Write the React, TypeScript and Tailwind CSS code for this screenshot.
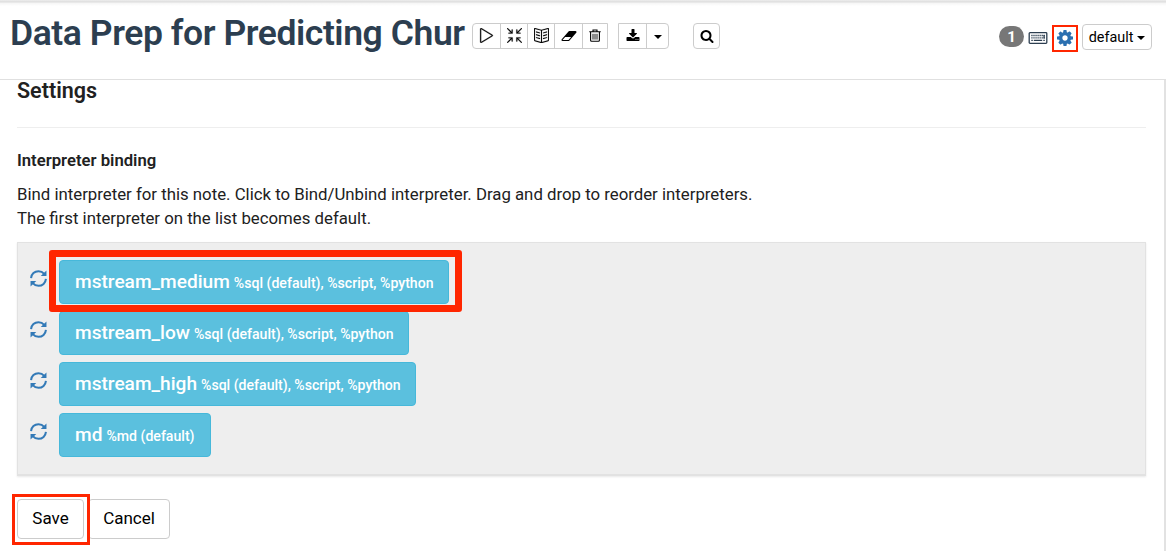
import React from 'react';
import { SlControlPlay, SlSizeActual, SlBookOpen } from 'react-icons/sl';

type IconProps = { className?: string };

const Cog = ({ className }: IconProps) => (
  <svg className={className} viewBox="0 128 1536 1536" fill="currentColor">
    <path transform="translate(-128 0)" d="M1152 896q0-106-75-181t-181-75-181 75-75 181 75 181 181 75 181-75 75-181zm512-109v222q0 12-8 23t-20 13l-185 28q-19 54-39 91 35 50 107 138 10 12 10 25t-9 23q-27 37-99 108t-94 71q-12 0-26-9l-138-108q-44 23-91 38-16 136-29 186-7 28-36 28h-222q-14 0-24.5-8.5t-11.5-21.5l-28-184q-49-16-90-37l-141 107q-10 9-25 9-14 0-25-11-126-114-165-168-7-10-7-23 0-12 8-23 15-21 51-66.5t54-70.5q-27-50-41-99l-183-27q-13-2-21-12.5t-8-23.5v-222q0-12 8-23t19-13l186-28q14-46 39-92-40-57-107-138-10-12-10-24 0-10 9-23 26-36 98.5-107.5t94.5-71.5q13 0 26 10l138 107q44-23 91-38 16-136 29-186 7-28 36-28h222q14 0 24.5 8.5t11.5 21.5l28 184q49 16 90 37l142-107q9-9 24-9 13 0 25 10 129 119 165 170 7 8 7 22 0 12-8 23-15 21-51 66.5t-54 70.5q26 50 41 98l183 28q13 2 21 12.5t8 23.5z" />
  </svg>
);

const Eraser = ({ className }: IconProps) => (
  <svg className={className} viewBox="0 0 2048 1792" fill="currentColor">
    <path d="M960 1408l336-384h-768l-336 384h768zm1013-1077q15 34 9.5 71.5t-30.5 65.5l-896 1024q-38 44-96 44h-768q-38 0-69.5-20.5t-47.5-54.5q-15-34-9.5-71.5t30.5-65.5l896-1024q38-44 96-44h768q38 0 69.5 20.5t47.5 54.5z" />
  </svg>
);

const Download = ({ className }: IconProps) => (
  <svg className={className} viewBox="0 0 1792 1792" fill="currentColor">
    <path d="M1344 1344q0-26-19-45t-45-19-45 19-19 45 19 45 45 19 45-19 19-45zm256 0q0-26-19-45t-45-19-45 19-19 45 19 45 45 19 45-19 19-45zm128-224v320q0 40-28 68t-68 28h-1472q-40 0-68-28t-28-68v-320q0-40 28-68t68-28h465l135 136q58 56 136 56t136-56l136-136h464q40 0 68 28t28 68zm-325-569q17 41-14 70l-448 448q-18 19-45 19t-45-19l-448-448q-31-29-14-70 17-39 59-39h256v-448q0-26 19-45t45-19h256q26 0 45 19t19 45v448h256q42 0 59 39z" />
  </svg>
);

const Search = ({ className }: IconProps) => (
  <svg className={className} viewBox="0 0 1792 1792" fill="currentColor">
    <path d="M1216 832q0-185-131.5-316.5t-316.5-131.5-316.5 131.5-131.5 316.5 131.5 316.5 316.5 131.5 316.5-131.5 131.5-316.5zm512 832q0 52-38 90t-90 38q-54 0-90-38l-343-342q-179 124-399 124-143 0-273.5-55.5t-225-150-150-225-55.5-273.5 55.5-273.5 150-225 225-150 273.5-55.5 273.5 55.5 225 150 150 225 55.5 273.5q0 220-124 399l343 343q37 37 37 90z" />
  </svg>
);

const Trash = ({ className }: IconProps) => (
  <svg className={className} viewBox="0 0 12 13" fill="none" stroke="currentColor">
    <path d="M0.3 2.8H11.7M4 2.5V1H8V2.5" strokeWidth="1.1" />
    <path d="M1.6 3V11.3q0 1 1 1H9.4q1 0 1-1V3" strokeWidth="1.1" />
    <path d="M4 4.8V10.6M6 4.8V10.6M8 4.8V10.6" strokeWidth="0.9" />
  </svg>
);

const Keyboard = ({ className }: IconProps) => (
  <svg className={className} viewBox="0 0 19 12" fill="none" stroke="currentColor">
    <rect x="0.7" y="0.7" width="17.6" height="10.6" rx="0.8" strokeWidth="1.3" />
    <path d="M2.8 3.5H16.3M2.8 5.8H16.3" strokeWidth="1.3" strokeDasharray="1.3 0.75" />
    <path d="M2.8 8.4H4.3M5.3 8.4H13.7M14.8 8.4H16.3M15.6 3V6.4" strokeWidth="1.3" />
  </svg>
);

const Refresh = ({ className }: IconProps) => (
  <svg className={className} viewBox="0 0 16 16" fill="none" stroke="currentColor" strokeWidth="1.9">
    <path d="M1 7.6C1.3 3.8 4.3 1.1 8 1.1c2.2 0 4 .9 5.4 2.5" />
    <path d="M15 8.4c-.3 3.8-3.3 6.5-7 6.5-2.2 0-4-.9-5.4-2.5" />
    <path d="M15.5.5v5.2h-5.4zM.5 15.5v-5.2h5.4z" fill="currentColor" stroke="none" />
  </svg>
);

const Caret = () => (
  <span className="h-0 w-0 border-x-4 border-t-4 border-x-transparent border-t-black" />
);

const cell = 'flex h-full items-center justify-center border-l border-[#ccc] pb-px first:border-l-0';

const interpreters = [
  { name: 'mstream_medium', modes: '%sql (default), %script, %python', width: 'w-[390px]', marked: true },
  { name: 'mstream_low', modes: '%sql (default), %script, %python', width: 'w-[350px]' },
  { name: 'mstream_high', modes: '%sql (default), %script, %python', width: 'w-[357px]' },
  { name: 'md', modes: '%md (default)', width: 'w-[152px]' },
];

export default function App() {
  return (
    <div className="flex h-[551px] w-[1166px] flex-col overflow-hidden bg-white font-['Roboto',sans-serif] text-[#212121]">
      <header className="flex h-20 shrink-0 items-start border-b border-[#e0e0e0] bg-[linear-gradient(to_bottom,#eeeeee_0px,#dddddd_2px,#f5f5f5_3px,#ffffff_6px)]">
        <h1 className="ml-[10px] mt-[13px] w-[462px] whitespace-nowrap text-[35.5px] font-semibold leading-[40px] tracking-[-0.43px] text-[#2c3e50]">
          Data Prep for Predicting Chur
        </h1>
        <div className="mt-[23px] flex h-[26px] w-[136px] rounded-l-[4px] border border-[#ccc] text-black">
          <button className={`${cell} w-[27px]`}><SlControlPlay className="size-[15px] stroke-black [stroke-width:20px]" /></button>
          <button className={`${cell} w-[27px]`}><SlSizeActual className="size-[15px] stroke-black [stroke-width:20px]" /></button>
          <button className={`${cell} w-[27px]`}><SlBookOpen className="size-[15px] stroke-black [stroke-width:10px]" /></button>
          <button className={`${cell} w-[28px]`}><Eraser className="h-[14px] w-4" /></button>
          <button className={`${cell} w-[25px]`}><Trash className="h-[13px] w-3" /></button>
        </div>
        <div className="ml-[10px] mt-[23px] flex h-[26px] w-[51px] rounded-r-[4px] border border-[#ccc] text-black">
          <button className={`${cell} w-[27px]`}><Download className="size-[14px]" /></button>
          <button className={`${cell} w-[22px] pt-[2px]`}><Caret /></button>
        </div>
        <button className="ml-6 mt-[23px] flex h-[26px] w-[27px] items-center justify-center rounded-[4px] border border-[#ccc] text-black">
          <Search className="size-[14px]" />
        </button>
        <div className="ml-auto mr-[14px] mt-[23px] flex items-start">
          <span className="mt-[3px] flex h-[21px] w-[25px] items-center justify-center rounded-full bg-[#777] pt-px text-[15px] font-bold leading-none text-white">1</span>
          <Keyboard className="ml-[4px] mt-[9px] h-3 w-[20px] text-[#2c3e50]" />
          <button className="ml-[4px] mt-[2px] flex h-[27px] w-[26px] items-center justify-center border-2 border-[#ff2600] pb-[2px] text-[#2a6fb0]">
            <Cog className="size-4" />
          </button>
          <button className="ml-[4px] mt-[1px] flex h-[26px] w-[70px] items-center justify-center gap-1 rounded-[4px] border border-[#ccc] pt-px text-[14.4px] text-black">
            default <Caret />
          </button>
        </div>
      </header>
      <main className="flex min-h-0 flex-1 flex-col border-r-2 border-[#e2e2e2] pl-[17px] pr-[18px]">
        <h2 className="-mt-px text-[21.5px] font-semibold leading-[24px]">Settings</h2>
        <hr className="mt-6 border-[#eee]" />
        <h3 className="mt-[22px] text-[16.7px] font-semibold leading-[22px]">Interpreter binding</h3>
        <p className="mt-[10px] text-[16.8px] leading-[24px]">
          Bind interpreter for this note. Click to Bind/Unbind interpreter. Drag and drop to reorder interpreters.
          <br />
          The first interpreter on the list becomes default.
        </p>
        <section className="mt-[12px] flex h-[234px] shrink-0 flex-col gap-[7px] border border-b-2 border-[#e2e2e2] bg-[#eee] pl-3 pt-[17px] shadow-[0_1px_2px_#00000018]">
          {interpreters.map((item) => (
            <div key={item.name} className="flex h-11 items-start">
              <Refresh className="mt-[10px] size-[17px] text-[#337ab7]" />
              <div className={`relative ml-3 flex h-11 items-baseline whitespace-nowrap rounded-[4px] border border-[#46b8da] bg-[#5bc0de] pl-[15px] text-white ${item.width}`}>
                <span className="text-[19.1px] font-medium leading-[41px]">{item.name}</span>
                <span className="ml-[4px] text-[14.1px] font-medium">{item.modes}</span>
                {item.marked && (
                  <span className="absolute -left-[11px] -top-[11px] z-10 h-[62px] w-[413px] rounded-[3px] border-[7px] border-[#ff2600]" />
                )}
              </div>
            </div>
          ))}
        </section>
        <div className="mt-[23px] flex gap-1 text-[17px] text-black">
          <button className="relative h-10 w-[67px] rounded-[4px] border border-[#ccc] pb-px">
            Save
            <span className="absolute -left-[6px] -top-[6px] h-[51px] w-[78px] border-[3px] border-[#ff2600]" />
          </button>
          <button className="h-10 w-[82px] rounded-[4px] border border-[#ccc] pb-px">Cancel</button>
        </div>
      </main>
    </div>
  );
}
